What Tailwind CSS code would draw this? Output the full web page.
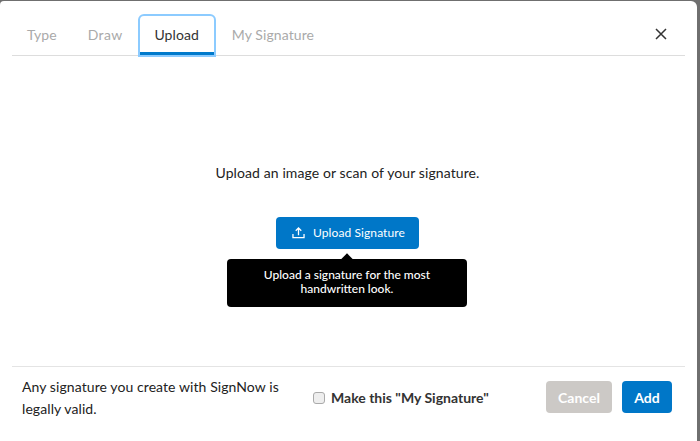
<!DOCTYPE html>
<html>
<head>
<script src="https://cdn.jsdelivr.net/npm/@tailwindcss/browser@4"></script>
</head>
<body class="bg-[#6f6f6f] font-['Lato',sans-serif]">
<div class="h-[441px] w-[700px] overflow-hidden pt-px">
  <div class="flex h-[440px] w-[697px] flex-col rounded-tr-md rounded-tl-sm bg-white px-3">
    <div class="flex h-[55px] shrink-0 items-end border-b border-[#dddddd]">
      <div class="relative flex h-[41px] flex-1 items-end">
        <span class="mb-[12px] ml-[15px] text-[14px] leading-[17px] tracking-[0.05px] text-[#aaaaaa]">Type</span>
        <span class="mb-[12px] ml-[31px] text-[14px] leading-[17px] tracking-[0.4px] text-[#aaaaaa]">Draw</span>
        <span class="-mb-0.5 ml-[15px] flex h-[43px] w-[78px] items-end justify-center rounded-t-md border-2 border-[#8ccbff] bg-white pb-[12px] text-[14px] leading-[17px] tracking-[0.1px] text-[#333333] shadow-[inset_0_-3px_0_#007acc]">Upload</span>
        <span class="mb-[12px] ml-[16px] text-[14px] leading-[17px] tracking-[0.1px] text-[#aaaaaa]">My Signature</span>
      </div>
      <svg class="mb-[15px] mr-[18px] h-3 w-3" viewBox="0 0 12 12" fill="none" stroke="#333333" stroke-width="1.5"><path d="M1 1l10 10M11 1L1 11"/></svg>
    </div>
    <div class="flex flex-1 flex-col items-center pr-[2px]">
      <p class="mt-[108px] text-[14px] leading-[17px] tracking-[0.1px] text-[#222222]">Upload an image or scan of your signature.</p>
      <div class="mt-[36px] flex h-8 w-[143px] items-center justify-center gap-2 rounded-sm bg-[#0077c8] pl-[2px] text-[12px] tracking-[0.1px] text-white">
        <svg class="h-[12px] w-[13px]" viewBox="0 0 14 13" fill="none" stroke="white" stroke-width="1.4"><path d="M7 9V1.5M4 4l3-3 3 3"/><path d="M1 7.5V11.5H13V7.5" /></svg>
        <span>Upload Signature</span>
      </div>
      <div class="relative -ml-px mt-[10px] h-12 w-[240px] rounded-sm bg-black px-4 pt-[9px] text-center text-[12px] font-medium leading-[14px] text-white">
        <span class="absolute -top-[4px] left-[116px] h-2 w-2 rotate-45 bg-black"></span>
        <p class="relative">Upload a signature for the most<br>handwritten look.</p>
      </div>
    </div>
    <div class="flex h-[75px] shrink-0 items-start border-t border-[#e4e4e4]">
      <p class="ml-[10px] mt-[9px] w-[275px] text-[14px] leading-[22px] tracking-[0.08px] text-[#222222]">Any signature you create with SignNow is legally valid.</p>
      <label class="ml-[16px] mt-[22px] flex items-center gap-[6px]">
        <span class="h-[12px] w-[12px] rounded-[3px] border border-[#aaaaaa] bg-[#eeeeee]"></span>
        <span class="text-[14px] font-bold leading-[17px] text-[#333333]">Make this "My Signature"</span>
      </label>
      <div class="ml-auto mr-[13px] mt-[14px] flex gap-[10px]">
        <span class="flex h-8 w-[66px] items-center justify-center rounded-sm bg-[#ccc9c6] text-[14px] font-bold text-white">Cancel</span>
        <span class="flex h-8 w-[50px] items-center justify-center rounded-sm bg-[#0077c8] text-[14px] font-bold text-white">Add</span>
      </div>
    </div>
  </div>
</div>
</body>
</html>
